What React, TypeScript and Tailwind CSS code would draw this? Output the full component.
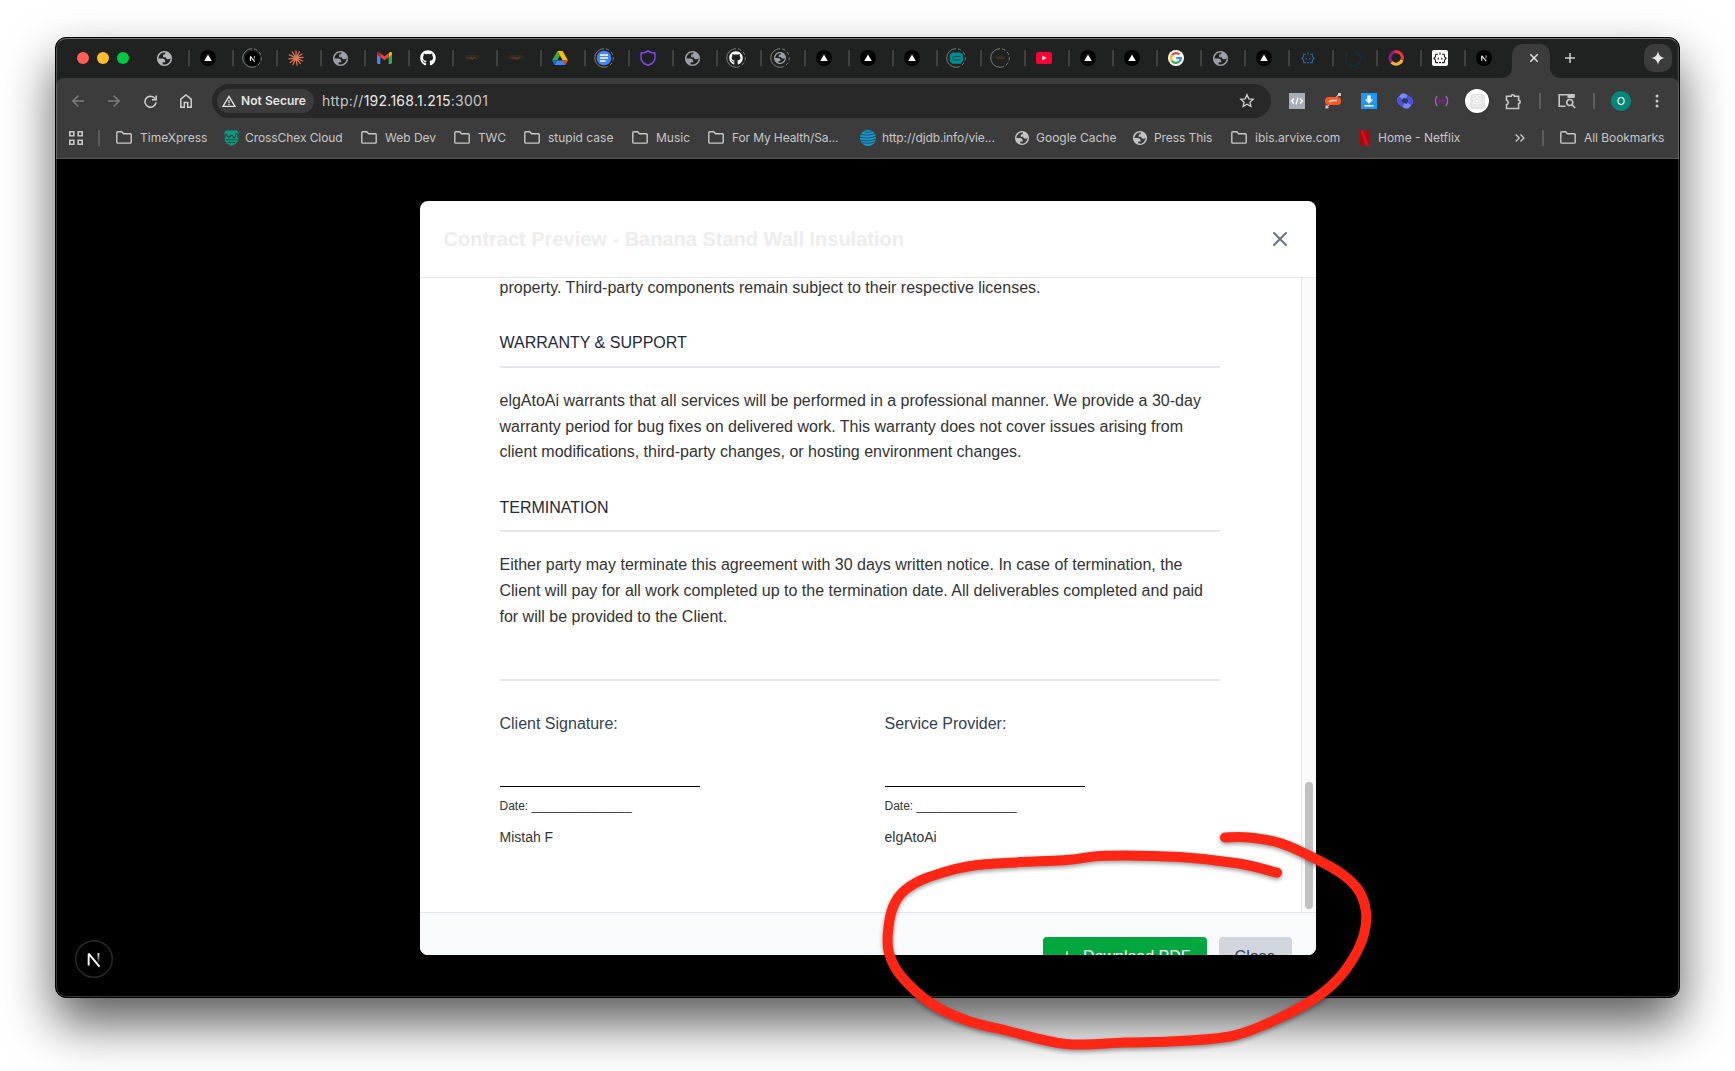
import React from "react";
import { FaGithub, FaReact } from "react-icons/fa";

const VercelIcon = () => (
  <svg width="16" height="16" viewBox="0 0 16 16">
    <circle cx="8" cy="8" r="8" fill="#000" />
    <path d="M8 4.4 11.8 11H4.2Z" fill="#fff" />
  </svg>
);

const Globe = ({ color = "#9aa0a6", size = 15 }: { color?: string; size?: number }) => (
  <svg width={size} height={size} viewBox="2 2 20 20" className="shrink-0">
    <path
      fill={color}
      fillRule="evenodd"
      d="M12 2C6.48 2 2 6.48 2 12s4.48 10 10 10 10-4.48 10-10S17.52 2 12 2zM4 12h4.4c3.407.022 4.922 1.73 4.543 5.127H9.488v2.47a8.004 8.004 0 0 0 10.498-8.083C19.327 12.504 18.332 13 17 13c-2.137 0-3.206-.916-3.206-2.75h-3.748c-.274-2.728.683-4.092 2.87-4.092 0-.975.327-1.597.811-1.97A8.004 8.004 0 0 0 4 12z"
    />
  </svg>
);

const NextIcon = ({ size = 16, ring = false }: { size?: number; ring?: boolean }) => (
  <svg width={size} height={size} viewBox="0 0 32 32">
    <defs>
      <linearGradient id="nextBar" x1="0" y1="0" x2="0" y2="1">
        <stop offset="0" stopColor="#fff" />
        <stop offset="1" stopColor="#fff" stopOpacity="0" />
      </linearGradient>
    </defs>
    <circle cx="16" cy="16" r={ring ? 15.4 : 16} fill="#000" stroke={ring ? "#2b2b2b" : "none"} strokeWidth="1.2" />
    <path d="M11.500 21.500V11.500L20.600 22.500" fill="none" stroke="#fff" strokeWidth={ring ? 1.6 : 2.200} strokeLinejoin="bevel" />
    <rect x="19" y="11" width={ring ? 1.5 : 2} height="8.500" fill="url(#nextBar)" />
  </svg>
);

const Claude = () => (
  <svg width="16" height="16" viewBox="0 0 16 16" stroke="#d97757" strokeWidth="1.3" strokeLinecap="round">
    <path d="M8 8V.8M8 8l3.3-6.3M8 8l6-4M8 8l7.2-.6M8 8l6.6 3M8 8l4.4 5.6M8 8l1 7M8 8l-3 6.6M8 8l-5.8 4.4M8 8l-7.2.8M8 8 1.4 4.8M8 8 4.2 1.8" />
  </svg>
);

const Gmail = () => (
  <svg width="15" height="12" viewBox="0 0 15 12">
    <path d="M0 2v8.8c0 .6.4 1.1 1 1.1h2.4V4.4Z" fill="#4285f4" />
    <path d="M15 2v8.8c0 .6-.4 1.1-1 1.1h-2.4V4.4Z" fill="#34a853" />
    <path d="M11.6 1.2v4L15 2.6V1.5C15 .2 13.700-.4 12.600.4Z" fill="#fbbc04" />
    <path d="M3.400 1.200v4L0 2.600V1.500C0 .2 1.300-.4 2.400.4Z" fill="#c5221f" />
    <path d="M3.400 1.200 7.500 4.300l4.100-3.100v4L7.500 8.300 3.400 5.200Z" fill="#ea4335" />
  </svg>
);

const Drive = () => (
  <svg width="16" height="14" viewBox="0 0 16 14">
    <path d="M5.400 0h5.200L8 4.500Z" fill="#188038" />
    <path d="M10.600 0 16 9.400h-5.200L5.400 0Z" fill="#fbbc04" />
    <path d="M5.400 0 8 4.500 5.200 9.400H0Z" fill="#34a853" />
    <path d="M0 9.400h5.200L2.600 14Z" fill="#1967d2" />
    <path d="M5.200 9.400h5.600l2.600 4.600H2.600Z" fill="#4285f4" />
    <path d="M10.800 9.400H16L13.400 14Z" fill="#ea4335" />
  </svg>
);

const Doc = () => (
  <svg width="16" height="16" viewBox="0 0 16 16">
    <circle cx="8" cy="8" r="7.300" fill="#4285f4" />
    <path d="M4 5h8M4 8h8M4 11h5.500" stroke="#fff" strokeWidth="1.500" />
  </svg>
);

const Shield = () => (
  <svg width="16" height="16" viewBox="0 0 16 16">
    <path d="M8 .9C6.500 2.200 3.500 3 1 3v4.500c0 4 3 6.500 7 7.800 4-1.300 7-3.800 7-7.800V3C12.500 3 9.500 2.200 8 .9Z" fill="none" stroke="#8b45f0" strokeWidth="1.500" strokeLinejoin="round" />
  </svg>
);

const Smudge = ({ w = 14 }: { w?: number }) => (
  <svg width={w} height="6" viewBox="0 0 14 6">
    <rect width="14" height="4.500" fill="#33291f" rx="1" />
    <path d="M2.500 2.500 5 3.500l1-1 1.500 1.800L9 2.500l2 .8" stroke="#5c3d22" fill="none" strokeWidth="1.200" />
  </svg>
);

const Teal = () => (
  <svg width="15" height="12" viewBox="0 0 16 12">
    <path d="M3.500 0H12l3 2.500V9l-2.500 3h-9L.8 9.500v-7Z" fill="#058a92" />
    <path d="M13 4.300H6a1.900 1.900 0 0 0 0 3.800h6.500" fill="none" stroke="#1f4b4c" strokeWidth="1" />
  </svg>
);

const YouTube = () => (
  <svg width="16" height="12" viewBox="0 0 16 12">
    <rect width="16" height="12" rx="2.500" fill="#ff0033" />
    <path d="M6.300 3.600 10.500 6l-4.200 2.400Z" fill="#fff" />
  </svg>
);

const Google = () => (
  <svg width="16" height="16" viewBox="0 0 16 16">
    <circle cx="8" cy="8" r="8" fill="#fff" />
    <g fill="none" strokeWidth="2.200">
      <path d="M4 5.200A4.900 4.900 0 0 1 11.500 4.500" stroke="#ea4335" />
      <path d="M4 5.200a4.900 4.900 0 0 0 0 5.600" stroke="#fbbc05" />
      <path d="M4 10.800a4.900 4.900 0 0 0 7.200.8" stroke="#34a853" />
      <path d="M11.200 11.600A4.900 4.900 0 0 0 12.900 8.200H8.200" stroke="#4285f4" />
    </g>
  </svg>
);

const Bot = ({ color, bg }: { color: string; bg?: string }) => (
  <svg width="16" height="16" viewBox="0 0 16 16" fill="none" stroke={color} strokeWidth="1.100">
    {bg && <rect width="16" height="16" rx="2" fill={bg} stroke="none" />}
    <path d="M6 4.300H3.800L3.300 7 1.800 8.500l1.500 1.200.5 2.900H6M10 4.300h2.200l.5 2.700 1.500 1.500-1.500 1.200-.5 2.900H10M8 2.300v2.500M7 12.600h2" />
    <path d="M5.500 7.800h1.300v1.700H5.500ZM9.200 7.800h1.300v1.700H9.200Z" fill={color} stroke="none" />
  </svg>
);

const DarkRing = () => (
  <svg width="17" height="17" viewBox="0 0 17 17">
    <path d="M9 1a7.500 7.500 0 1 1-5 1.800" fill="none" stroke="#12303c" strokeWidth="1.200" />
  </svg>
);

const Swirl = () => (
  <svg width="16" height="16" viewBox="0 0 16 16" fill="none" strokeWidth="3">
    <path d="M5 13.300A6.300 6.300 0 0 1 7 1.800" stroke="#8a1f7d" />
    <path d="M6.500 1.900A6.300 6.300 0 0 1 14.200 9.500" stroke="#f5333f" />
    <path d="M14 9.800A6.300 6.300 0 0 1 3.500 12.300" stroke="#fbb034" />
  </svg>
);

const Sleeping = ({ children }: { children: React.ReactNode }) => (
  <span className="relative flex size-5 items-center justify-center">
    <svg className="absolute" width="20" height="20" viewBox="0 0 20 20">
      <path d="M10 19.300A9.300 9.300 0 0 1 10 .7" fill="none" stroke="#7d7f7f" strokeWidth="1" />
      <path d="M10 .7a9.300 9.300 0 0 1 0 18.600" fill="none" stroke="#7d7f7f" strokeWidth="1" strokeDasharray="3.500 2.300" strokeDashoffset="-2" />
    </svg>
    {children}
  </span>
);

const tabs: React.ReactNode[] = [
  <Globe color="#b4b6b8" />,
  <VercelIcon />,
  <Sleeping><NextIcon size={15} /></Sleeping>,
  <Claude />,
  <Globe />,
  <Gmail />,
  <FaGithub size={16} color="#fff" />,
  <Smudge />,
  <Smudge />,
  <Drive />,
  <Sleeping><Doc /></Sleeping>,
  <Shield />,
  <Globe />,
  <Sleeping><FaGithub size={14} color="#fff" /></Sleeping>,
  <Sleeping><Globe size={12} /></Sleeping>,
  <VercelIcon />,
  <VercelIcon />,
  <VercelIcon />,
  <Sleeping><Teal /></Sleeping>,
  <Sleeping><Smudge w={10} /></Sleeping>,
  <YouTube />,
  <VercelIcon />,
  <VercelIcon />,
  <Google />,
  <Globe />,
  <VercelIcon />,
  <Bot color="#2a6a9a" />,
  <DarkRing />,
  <Swirl />,
  <Bot color="#222" bg="#fff" />,
  <NextIcon />,
];

const TabStrip = () => (
  <div className="flex h-10 shrink-0 items-center bg-[#1f2221]">
    <div className="flex w-[88px] gap-2 pl-[21px]">
      <span className="size-3 rounded-full bg-[#ff5f57]" />
      <span className="size-3 rounded-full bg-[#febc2e]" />
      <span className="size-3 rounded-full bg-[#00c840]" />
    </div>
    {tabs.map((icon, i) => (
      <div key={i} className="flex w-11 shrink-0 items-center">
        <span className={i === 0 ? "h-4 w-[2px]" : "h-4 w-[2px] bg-[#3f4241]"} />
        <span className="ml-1.5 flex h-6 w-6 items-center justify-center">{icon}</span>
      </div>
    ))}
    <div className="relative ml-1 mt-1.5 flex h-[34px] w-[38px] items-center rounded-t-[10px] bg-[#3c3c3c] pl-[17px] pb-[6px]">
      <svg className="absolute -left-[10px] bottom-0" width="10" height="10" viewBox="0 0 10 10"><path d="M10 0v10H0A10 10 0 0 0 10 0" fill="#3c3c3c" /></svg>
      <svg className="absolute -right-[10px] bottom-0" width="10" height="10" viewBox="0 0 10 10"><path d="M0 0v10h10A10 10 0 0 1 0 0" fill="#3c3c3c" /></svg>
      <svg width="10" height="10" viewBox="0 0 10 10" stroke="#e3e3e3" strokeWidth="1.500"><path d="m1.300 1.300 7.400 7.400m0-7.400-7.400 7.400" /></svg>
    </div>
    <svg className="ml-[15px]" width="10" height="10" viewBox="0 0 10 10" stroke="#d0d0d0" strokeWidth="1.500"><path d="M5 0v10M0 5h10" /></svg>
    <div className="ml-auto mr-[7px] flex size-7 items-center justify-center rounded-[10px] bg-[#3c3c3c]">
      <svg width="14" height="14" viewBox="0 0 14 14" fill="#e8e8e8"><path d="M7 0c.6 4.200 2.800 6.400 7 7-4.200.6-6.400 2.800-7 7-.6-4.200-2.800-6.400-7-7 4.200-.6 6.400-2.800 7-7Z" /></svg>
    </div>
  </div>
);

const Slot = ({ children }: { children: React.ReactNode }) => (
  <span className="flex w-9 shrink-0 items-center justify-center">{children}</span>
);

const Toolbar = () => (
  <div className="flex h-[46px] shrink-0 items-center pl-1">
    <Slot>
      <svg width="12" height="12" viewBox="0 0 12 12" fill="none" stroke="#7c7c7c" strokeWidth="1.500"><path d="M12 6H1M6.300.6.900 6l5.400 5.400" /></svg>
    </Slot>
    <Slot>
      <svg width="12" height="12" viewBox="0 0 12 12" fill="none" stroke="#7c7c7c" strokeWidth="1.500"><path d="M0 6h11M5.700.6 11.100 6l-5.400 5.400" /></svg>
    </Slot>
    <Slot>
      <svg width="13" height="13" viewBox="0 0 13 13" fill="none" stroke="#d0d0d0" strokeWidth="1.500"><path d="M11 3.500A5.500 5.500 0 1 0 12 7.300M12.200.5v4.200H8" /></svg>
    </Slot>
    <Slot>
      <svg width="12" height="14" viewBox="0 0 12 14" fill="none" stroke="#d0d0d0" strokeWidth="1.500"><path d="M.8 5.200 6 1l5.200 4.200v8H7.700V8.500H4.300v4.700H.8Z" /></svg>
    </Slot>
    <div className="ml-2 flex h-[34px] w-[1059px] items-center rounded-full bg-[#282828] pl-[5px] pr-4">
      <div className="flex h-6 w-[97px] items-center gap-[5px] rounded-full bg-[#3c3c3c] pl-[5px]">
        <svg width="14" height="12" viewBox="0 0 14 12" fill="none" stroke="#e3e3e3" strokeWidth="1.300"><path d="M7 1.300 13 11.300H1ZM7 5v3M7 8.800v1.200" /></svg>
        <span className="whitespace-nowrap text-[12px] font-semibold tracking-[0.05px] text-[#e3e3e3]">Not Secure</span>
      </div>
      <span className="-mt-px ml-2 whitespace-nowrap text-[14px] tracking-[0.26px] text-[#c7c7c7]">
        http://<span className="text-[#e8e8e8]">192.168.1.215</span>:3001
      </span>
      <svg className="ml-auto" width="16" height="16" viewBox="0 0 16 16" fill="none" stroke="#d0d0d0" strokeWidth="1.300"><path d="m8 1.700 1.800 4.100 4.400.4-3.300 3 1 4.300L8 11.200l-3.900 2.300 1-4.300-3.300-3 4.400-.4Z" /></svg>
    </div>
    <div className="ml-2 flex items-center">
      <Slot>
        <svg width="16" height="16" viewBox="0 0 16 16"><rect width="16" height="16" fill="#a9adb8" /><path d="M5 5.500 2.500 8 5 10.500M11 5.500 13.500 8 11 10.500M9 4.500l-2 7" fill="none" stroke="#fff" strokeWidth="1.300" /></svg>
      </Slot>
      <Slot>
        <svg width="16" height="16" viewBox="0 0 16 16">
          <path d="M2 14 5 10.500M11 4.500 14 1.500" stroke="#b9b9b9" strokeWidth="1.300" />
          <rect x="13" y="0" width="3" height="3" fill="#ccc" />
          <path d="M.8 11.500 4 15l-3.600.8Z" fill="#ccc" />
          <rect x="0" y="4" width="16" height="8" rx="3.800" fill="#ff5722" />
          <path d="M4 8.500h1.500L6.500 7.500H12" fill="none" stroke="#f3e3dd" strokeWidth="1.600" />
        </svg>
      </Slot>
      <Slot>
        <svg width="16" height="16" viewBox="0 0 16 16"><rect width="16" height="16" fill="#2196f3" /><path d="M6.300 2.500h3.400v4h2.500L8 10.800 3.800 6.500h2.500ZM3.500 12h9v1.500h-9Z" fill="#fff" /></svg>
      </Slot>
      <Slot>
        <svg width="16" height="16" viewBox="0 0 16 16">
          <path d="M4 1Q6-.2 8.500.8L14.500 5Q16.500 7.500 15.500 10.500L12 15Q10 16.200 7.500 15.200L1.500 11Q-.5 8.500.5 5.500Z" fill="#7389ff" />
          <path d="M2.500 4 8 8.500 5.500 14 1.500 11Q-.5 8.500.5 5.500ZM13.500 12 8 7.500 10.500 2 14.500 5Q16.500 7.500 15.500 10.500Z" fill="#4a50e0" />
          <path d="M7.300 4.800 11 6.800q.8 2.400-1.600 4.200L5 9q-.6-2.600 2.300-4.200Z" fill="#33345c" />
        </svg>
      </Slot>
      <Slot>
        <svg width="15" height="14" viewBox="0 0 15 14" fill="none" strokeWidth="1.300">
          <path d="M3.300 2a7.500 7.500 0 0 0 0 10M11.700 2a7.500 7.500 0 0 1 0 10" stroke="#a766b3" />
          <path d="M5.500 4.500a4.500 4.500 0 0 0 0 5M9.500 4.500a4.500 4.500 0 0 1 0 5" stroke="#8c1a9c" />
          <circle cx="7.500" cy="7" r="1.200" fill="#a010b0" />
        </svg>
      </Slot>
      <Slot>
        <span className="flex size-6 shrink-0 items-center justify-center rounded-full bg-white shadow">
          <span className="flex size-[15px] items-center justify-center rounded-sm bg-[#e2e2e2]"><FaReact size={14} color="#fafafa" /></span>
        </span>
      </Slot>
      <Slot>
        <svg width="17" height="17" viewBox="0 0 17 17" fill="none" stroke="#c7c7c7" strokeWidth="1.600"><path d="M1.500 3.300h4.700a1.600 1.600 0 0 1 3.200 0h4.200v4a1.600 1.600 0 0 1 0 3.200v5H1.500v-3.900a2.200 2.200 0 0 0 0-4.300Z" /></svg>
      </Slot>
    </div>
    <span className="ml-2 h-4 w-[2px] bg-[#5c5c5c]" />
    <span className="ml-[17px] flex w-[19px]">
      <svg width="18" height="16" viewBox="0 0 18 16" fill="none" stroke="#c7c7c7" strokeWidth="1.600"><path d="M7.500 13.200H1.200V1.800h14.600v3" /><path d="M9.500 1h7v4h-7Z" fill="#c7c7c7" stroke="none" /><circle cx="11.800" cy="9.500" r="3" /><path d="m14 11.700 3.200 3.300" /></svg>
    </span>
    <span className="ml-[16px] h-4 w-[2px] bg-[#5c5c5c]" />
    <span className="ml-4 flex size-5 items-center justify-center rounded-full bg-[#00897b] text-[11px] text-white">O</span>
    <svg className="ml-6" width="4" height="14" viewBox="0 0 4 14" fill="#c7c7c7"><circle cx="2" cy="2" r="1.500" /><circle cx="2" cy="7" r="1.500" /><circle cx="2" cy="12" r="1.500" /></svg>
  </div>
);

const Folder = () => (
  <svg width="16" height="13" viewBox="0 0 16 13" fill="none" stroke="#c7c7c7" strokeWidth="1.400"><path d="M.8 11.200V1.700q0-.9.900-.9h4.100l1.700 1.900h6.800q.9 0 .9.900v7.600q0 .9-.9.900H1.700q-.9 0-.9-.9Z" /></svg>
);

const Cross = () => (
  <svg width="15" height="16" viewBox="0 0 15 16">
    <path d="M2.500.5h10L14.500 2v6c0 4-3 6.500-7 7.800C3.500 14.500.5 12 .5 8V2Z" fill="#0b9c80" />
    <path d="M1 8V5.500q1-2 2 0t2 1.500 2.200-1.500 2.300 1.500 2-1.500 2.500 0V8" fill="none" stroke="#333" strokeWidth="1.100" />
    <path d="M1.500 9.800h12M3.500 12.500h8" stroke="#36453f" strokeWidth="1" />
  </svg>
);

const Att = () => (
  <svg width="16" height="16" viewBox="0 0 16 16">
    <circle cx="8" cy="8" r="8" fill="#0d9ddb" />
    <path d="M1 4.500q7 1.800 14-.8M0 7.300q8 2.200 16-1M.5 10.200q8 1.800 15.500-1M2 12.800q7 1.300 12.500-.8M4.500 2q4 1 7.500-.4" fill="none" stroke="#3c3c3c" strokeWidth=".9" />
  </svg>
);

const Netflix = () => (
  <svg width="9" height="16" viewBox="0 0 9 16"><path d="M0 0h3v16H0ZM6 0h3v16H6Z" fill="#b1060f" /><path d="M0 0h3l6 16H6Z" fill="#e50914" /></svg>
);

const bookmarks: { icon: React.ReactNode; label: string; box: string; gap: string; track?: string }[] = [
  { icon: <Folder />, label: "TimeXpress", box: "w-[108px]", gap: "gap-2" },
  { icon: <Cross />, label: "CrossChex Cloud", box: "w-[137px]", gap: "gap-1.5", track: "tracking-[-0.08px]" },
  { icon: <Folder />, label: "Web Dev", box: "w-[93px]", gap: "gap-2" },
  { icon: <Folder />, label: "TWC", box: "w-[70px]", gap: "gap-2", track: "tracking-[-0.2px]" },
  { icon: <Folder />, label: "stupid case", box: "w-[108px]", gap: "gap-2" },
  { icon: <Folder />, label: "Music", box: "w-[76px]", gap: "gap-2" },
  { icon: <Folder />, label: "For My Health/Sa...", box: "w-[152px]", gap: "gap-2", track: "tracking-[-0.12px]" },
  { icon: <Att />, label: "http://djdb.info/vie...", box: "w-[155px]", gap: "gap-1.5", track: "tracking-[-0.1px]" },
  { icon: <Globe color="#c1c3c5" size={14} />, label: "Google Cache", box: "w-[118px]", gap: "gap-[7px]" },
  { icon: <Globe color="#c1c3c5" size={14} />, label: "Press This", box: "w-[98px]", gap: "gap-[7px]", track: "tracking-[-0.08px]" },
  { icon: <Folder />, label: "ibis.arvixe.com", box: "w-[129px]", gap: "gap-2" },
  { icon: <Netflix />, label: "Home - Netflix", box: "w-[110px]", gap: "gap-[9px]" },
];

const BookmarksBar = () => (
  <div className="flex h-[34px] shrink-0 items-center pb-[7px] pl-[13px] text-[12px] text-[#c7c7c7]">
    <svg width="14" height="14" viewBox="0 0 14 14" fill="none" stroke="#c7c7c7" strokeWidth="1.600"><path d="M.8.8h4v4h-4ZM9.200.8h4v4h-4ZM.8 9.200h4v4h-4ZM9.200 9.200h4v4h-4Z" /></svg>
    <span className="ml-[15px] mr-4 h-4 w-[2px] bg-[#5c5c5c]" />
    {bookmarks.map((b) => (
      <div key={b.label} className={`flex shrink-0 items-center whitespace-nowrap ${b.box} ${b.gap}`}>
        {b.icon}
        <span className={b.track}>{b.label}</span>
      </div>
    ))}
    <svg className="ml-[45px]" width="10" height="8" viewBox="0 0 10 8" fill="none" stroke="#c7c7c7" strokeWidth="1.400"><path d="m.8.600 3.400 3.400L.8 7.400M5.500.600 8.900 4 5.500 7.400" /></svg>
    <span className="ml-[17px] mr-4 h-4 w-[2px] bg-[#5c5c5c]" />
    <Folder />
    <span className="ml-2 whitespace-nowrap tracking-[-0.06px]">All Bookmarks</span>
  </div>
);

const SectionTitle = ({ children }: { children: React.ReactNode }) => (
  <h3 className="border-b-2 border-[#e5e7eb] pb-2.5 text-[16px] leading-[25.6px] text-[#1e293b]">{children}</h3>
);

const Signature = ({ label, name }: { label: string; name: string }) => (
  <div>
    <p className="leading-[25.6px] text-[#334155]">{label}</p>
    <div className="mt-[49px] w-[200px] border-t border-black" />
    <p className="mt-[10px] text-[12px] leading-[19.2px]">Date: _______________</p>
    <p className="mt-[10px] text-[14px] leading-[22.4px]">{name}</p>
  </div>
);

const Modal = () => (
  <div className="mt-[42px] flex h-[754px] w-[896px] flex-col overflow-hidden rounded-lg bg-white font-['Liberation_Sans',Arial,sans-serif]">
    <div className="flex h-[77px] shrink-0 items-center justify-between border-b border-[#e5e7eb] px-6">
      <h2 className="text-xl font-bold text-[#ededed]">Contract Preview - Banana Stand Wall Insulation</h2>
      <svg className="size-6" viewBox="0 0 24 24" fill="none" stroke="#6a7282" strokeWidth="2" strokeLinecap="round"><path d="M6 18 18 6M6 6l12 12" /></svg>
    </div>
    <div className="flex h-[634px] shrink-0 overflow-hidden">
      <div className="flex-1 pl-20 text-[16px] leading-[25.6px] text-[#333]">
        <div className="-mt-[3.2px] w-[720px]">
          <p>property. Third-party components remain subject to their respective licenses.</p>
          <div className="mt-[30px]">
            <SectionTitle>WARRANTY &amp; SUPPORT</SectionTitle>
            <p className="mt-5">
              elgAtoAi warrants that all services will be performed in a professional manner. We provide a 30-day<br />
              warranty period for bug fixes on delivered work. This warranty does not cover issues arising from<br />
              client modifications, third-party changes, or hosting environment changes.
            </p>
          </div>
          <div className="mt-[30px]">
            <SectionTitle>TERMINATION</SectionTitle>
            <p className="mt-5">
              Either party may terminate this agreement with 30 days written notice. In case of termination, the<br />
              Client will pay for all work completed up to the termination date. All deliverables completed and paid<br />
              for will be provided to the Client.
            </p>
          </div>
          <div className="mt-[50px] grid grid-cols-2 gap-[50px] border-t-2 border-[#e5e7eb] pt-[30px]">
            <Signature label="Client Signature:" name="Mistah F" />
            <Signature label="Service Provider:" name="elgAtoAi" />
          </div>
        </div>
      </div>
      <div className="flex w-[15px] flex-col justify-end border-l border-[#e6e6e6] bg-[#fafafa] pb-[3px] pl-[3px]">
        <div className="h-[127px] w-2 rounded-full bg-[#c1c1c1]" />
      </div>
    </div>
    <div className="flex h-[89px] shrink-0 items-start justify-end gap-3 border-t border-[#e5e7eb] bg-[#f9fafb] px-6 pt-6 text-[16px]">
      <button className="flex h-10 items-center gap-2 rounded bg-[#00a63e] px-4 text-white">
        <svg className="size-4" viewBox="0 0 24 24" fill="none" stroke="currentColor" strokeWidth="2" strokeLinecap="round" strokeLinejoin="round"><path d="M4 16v1a3 3 0 0 0 3 3h10a3 3 0 0 0 3-3v-1m-4-4-4 4m0 0-4-4m4 4V4" /></svg>
        Download PDF
      </button>
      <button className="h-10 rounded bg-[#d1d5dc] px-4 text-[#364153]">Close</button>
    </div>
  </div>
);

const strokePoints: [number, number][] = [
  [1225, 837.5], [1249, 837.5], [1280, 843], [1314, 858], [1342, 874], [1359, 891], [1366, 912], [1364, 934],
  [1354, 957], [1337, 980], [1314, 999], [1273, 1021], [1232, 1036], [1180, 1041], [1125, 1042.5], [1066, 1044],
  [1008, 1031], [967, 1020.5], [932, 1004], [901, 976], [889, 953], [888, 932], [893, 907], [905, 890],
  [929, 877], [977, 865], [1066, 860], [1104, 855.7], [1180, 857], [1239, 863.5], [1277, 872.7],
];

const smoothPath = (pts: [number, number][]) => {
  let d = `M${pts[0][0]} ${pts[0][1]}`;
  for (let i = 0; i < pts.length - 1; i++) {
    const a = pts[Math.max(0, i - 1)];
    const b = pts[i];
    const c = pts[i + 1];
    const e = pts[Math.min(pts.length - 1, i + 2)];
    d += `C${b[0] + (c[0] - a[0]) / 6} ${b[1] + (c[1] - a[1]) / 6} ${c[0] - (e[0] - b[0]) / 6} ${c[1] - (e[1] - b[1]) / 6} ${c[0]} ${c[1]}`;
  }
  return d;
};

export default function App() {
  return (
    <div className="relative h-[1071px] w-[1735px] overflow-hidden bg-white pl-[55px] pt-[37px] font-['Inter',sans-serif]">
      <div className="h-[961px] w-[1625px] rounded-[11px] border border-black bg-black shadow-[0_25px_50px_rgba(0,0,0,0.65)]">
        <div className="relative flex h-full flex-col overflow-hidden rounded-[10px] bg-[#1f2221]">
          <TabStrip />
          <div className="h-[81px] shrink-0 rounded-t-[8px] border-b border-[#555] bg-[#3c3c3c]">
            <Toolbar />
            <BookmarksBar />
          </div>
          <div className="flex flex-1 justify-center bg-black">
            <Modal />
          </div>
          <div className="absolute bottom-[19px] left-[19px]">
            <NextIcon size={38} ring />
          </div>
          <div className="pointer-events-none absolute inset-0 rounded-[10px] border border-white/20 border-t-white/35" />
        </div>
      </div>
      <svg className="pointer-events-none absolute left-0 top-0 drop-shadow-[0_2px_2px_rgba(0,0,0,0.4)]" width="1735" height="1071" viewBox="0 0 1735 1071">
        <path d={smoothPath(strokePoints)} fill="none" stroke="#ff2616" strokeWidth="10" strokeLinecap="round" strokeLinejoin="round" />
      </svg>
    </div>
  );
}
